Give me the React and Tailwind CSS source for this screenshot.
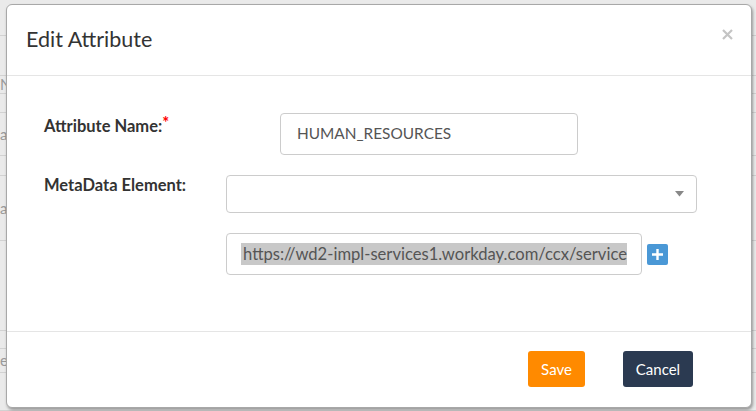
import React from "react";

const rows = [
  { h: 36, t: "" },
  { h: 40, t: "" },
  { h: 18, t: "N" },
  { h: 19, t: "" },
  { h: 43, t: "ag" },
  { h: 20, t: "" },
  { h: 65, t: "ag" },
  { h: 90, t: "" },
  { h: 18, t: "" },
  { h: 24, t: "e" },
  { h: 38, t: "" },
];

export default function App() {
  return (
    <div
      className="relative w-[756px] h-[411px] overflow-hidden bg-[#eaeaea]"
      style={{ fontFamily: "Lato, 'Noto Sans', sans-serif" }}
    >
      {/* page behind the modal */}
      <div className="flex flex-col">
        {rows.map((r, i) => (
          <div
            key={i}
            className="border-b border-[#d2d2d2] text-[15px] text-[#9a9a9a] leading-none flex items-center"
            style={{ height: r.h }}
          >
            {r.t}
          </div>
        ))}
      </div>

      {/* modal */}
      <div className="absolute left-[6px] top-[4px] w-[746px] h-[404px] bg-white rounded-[6px] border border-[#a8a8a8] shadow-[1px_2px_3px_rgba(0,0,0,0.35)] flex flex-col">
        {/* header */}
        <div className="h-[71px] border-b border-[#e5e5e5] flex items-center justify-between pl-[19px] pr-[18px]">
          <h4 className="text-[21.5px] text-[#333] leading-none">Edit Attribute</h4>
          <svg width="11" height="11" viewBox="0 0 11 11" className="mb-[12px]">
            <path d="M1 1 L10 10 M10 1 L1 10" stroke="#c4c4c4" strokeWidth="2.2" />
          </svg>
        </div>

        {/* body */}
        <div className="h-[256px] border-b border-[#e5e5e5] flex flex-col pt-[37px]">
          <div className="flex items-start">
            <div className="w-[273px] pl-[37px] pt-[3px] text-[16.5px] font-bold text-[#333] leading-[20px]">
              Attribute Name:<span className="text-[#ff0000] align-top leading-[14px]">*</span>
            </div>
            <div className="w-[298px] h-[42px] border border-[#cccccc] rounded-[4px] flex items-center pl-[16px] text-[15.4px] text-[#555]">
              HUMAN_RESOURCES
            </div>
          </div>

          <div className="flex items-start mt-[20px]">
            <div className="w-[219px] pl-[37px] pt-[0px] text-[16.5px] font-bold text-[#333] leading-[20px]">
              MetaData Element:
            </div>
            <div className="w-[471px] h-[38px] border border-[#cccccc] rounded-[4px] flex items-center justify-end pr-[12px]">
              <svg width="9" height="6" viewBox="0 0 9 6">
                <path d="M0 0 L9 0 L4.5 5.5 Z" fill="#888" />
              </svg>
            </div>
          </div>

          <div className="flex items-center mt-[20px] pl-[219px]">
            <div className="w-[416px] h-[42px] border border-[#cccccc] rounded-[4px] flex items-center px-[14px]">
              <div className="overflow-hidden whitespace-nowrap w-full">
                <span className="bg-[#c8c8c8] text-[16.6px] text-[#555] leading-[22px] inline-block px-[2px]">
                  https://wd2-impl-services1.workday.com/ccx/service
                </span>
              </div>
            </div>
            <div className="ml-[5px] w-[21px] h-[21px] rounded-[2px] bg-[#4a98d6] flex items-center justify-center">
              <svg width="13" height="13" viewBox="0 0 13 13">
                <path d="M6.5 1 V12 M1 6.5 H12" stroke="white" strokeWidth="2.4" />
              </svg>
            </div>
          </div>
        </div>

        {/* footer */}
        <div className="flex-1 flex items-start justify-end pt-[19px] pr-[58px] gap-[38px]">
          <button className="h-[36px] w-[57px] rounded-[3px] bg-[#ff8a00] text-white text-[15px]">
            Save
          </button>
          <button className="h-[36px] w-[70px] rounded-[3px] bg-[#2b3a51] text-white text-[15px]">
            Cancel
          </button>
        </div>
      </div>
    </div>
  );
}
